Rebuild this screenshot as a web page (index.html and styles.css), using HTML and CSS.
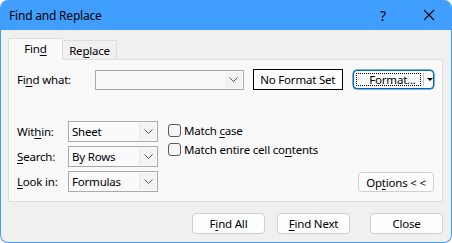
FILE: index.html
```html
<!DOCTYPE html>
<html lang="en">
<head>
    <meta charset="UTF-8">
    <meta name="viewport" content="width=device-width, initial-scale=1.0">
    <title>Find and Replace</title>
    <link rel="stylesheet" href="styles.css">
</head>
<body>
    <div class="window">
        <div class="titlebar">
            <p class="title">Find and Replace</p>
            <span class="title-help">?</span>
            <span class="title-close">
                <svg width="12" height="12" viewBox="0 0 12 12"><path d="M1 1 L11 11 M11 1 L1 11" stroke="#000" stroke-width="1.1" fill="none"/></svg>
            </span>
        </div>

        <div class="tabs">
            <div class="tab active"><span>Fin<u>d</u></span></div>
            <div class="tab"><span>Re<u>p</u>lace</span></div>
        </div>

        <div class="panel">
            <div class="find-row">
                <label class="label find-label" for="findWhat">Fi<u>n</u>d what:</label>
                <div class="combo">
                    <input type="text" id="findWhat" class="combo-input">
                    <span class="drop">
                        <svg width="9" height="5" viewBox="0 0 9 5"><path d="M0.5 0.5 L4.5 4.5 L8.5 0.5" stroke="#555" fill="none"/></svg>
                    </span>
                </div>
                <div class="format-preview">No Format Set</div>
                <div class="format-btn">
                    <span class="format-focus">Format...</span>
                    <span class="format-split"></span>
                    <span class="format-arrow"></span>
                </div>
            </div>

            <div class="options">
                <div class="selects">
                    <span class="label">Wit<u>h</u>in:</span>
                    <div class="select"><span>Sheet</span><span class="drop"><svg width="9" height="5" viewBox="0 0 9 5"><path d="M0.5 0.5 L4.5 4.5 L8.5 0.5" stroke="#555" fill="none"/></svg></span></div>
                    <span class="label"><u>S</u>earch:</span>
                    <div class="select"><span>By Rows</span><span class="drop"><svg width="9" height="5" viewBox="0 0 9 5"><path d="M0.5 0.5 L4.5 4.5 L8.5 0.5" stroke="#555" fill="none"/></svg></span></div>
                    <span class="label"><u>L</u>ook in:</span>
                    <div class="select"><span>Formulas</span><span class="drop"><svg width="9" height="5" viewBox="0 0 9 5"><path d="M0.5 0.5 L4.5 4.5 L8.5 0.5" stroke="#555" fill="none"/></svg></span></div>
                </div>
                <div class="checks">
                    <label class="check"><span class="box"></span><span>Match <u>c</u>ase</span></label>
                    <label class="check"><span class="box"></span><span>Match entire cell co<u>n</u>tents</span></label>
                </div>
                <div class="btn options-btn"><span>Op<u>t</u>ions &lt; &lt;</span></div>
            </div>
        </div>

        <div class="footer">
            <div class="btn"><span>F<u>i</u>nd All</span></div>
            <div class="btn"><span><u>F</u>ind Next</span></div>
            <div class="btn close-btn"><span>Close</span></div>
        </div>
    </div>
</body>
</html>
```

FILE: styles.css
```css
* {
    margin: 0;
    box-sizing: border-box;
}
html, body {
    width: 452px;
    height: 243px;
    background-color: white;
    overflow: hidden;
}
body {
    font-family: "Noto Sans", "Open Sans", sans-serif;
    font-size: 11.5px;
    letter-spacing: -0.2px;
    color: black;
}
u {
    text-decoration-thickness: 1px;
    text-underline-offset: 2px;
}
.window {
    width: 452px;
    height: 243px;
    border: 1px solid rgb(64, 158, 255);
    border-top: none;
    border-radius: 8px;
    background-color: rgb(240, 240, 240);
    overflow: hidden;
    display: flex;
    flex-direction: column;
}
.titlebar {
    height: 30px;
    flex-shrink: 0;
    background-color: rgb(64, 158, 255);
    display: flex;
    align-items: center;
    padding-left: 8px;
}
.title {
    flex: 1;
    font-size: 12px;
}
.title-help {
    width: 46px;
    text-align: center;
    font-size: 14px;
}
.title-close {
    width: 46px;
    display: flex;
    justify-content: center;
    margin-right: -1px;
}

.tabs {
    display: flex;
    align-items: flex-end;
    margin-top: 8px;
    padding-left: 7px;
    height: 21px;
    position: relative;
    z-index: 1;
}
.tab {
    height: 19px;
    width: 54px;
    border: 1px solid rgb(222, 222, 222);
    border-bottom: none;
    background-color: rgb(240, 240, 240);
    display: flex;
    justify-content: center;
    align-items: center;
}
.tab.active {
    height: 22px;
    width: 55px;
    margin-bottom: -1px;
    background-color: rgb(249, 249, 249);
    padding-bottom: 2px;
}
.tab.active + .tab {
    border-left: none;
}

.panel {
    margin: 0 8px 0 7px;
    height: 143px;
    border: 1px solid rgb(222, 222, 222);
    background-color: rgb(249, 249, 249);
    padding: 9px 8px 0 8px;
    display: flex;
    flex-direction: column;
}
.find-row {
    display: flex;
    align-items: center;
    height: 21px;
}
.find-label {
    width: 78px;
}
.combo {
    width: 149px;
    height: 20px;
    border: 1px solid rgb(170, 170, 170);
    background-color: rgb(250, 250, 250);
    display: flex;
}
.combo-input {
    flex: 1;
    min-width: 0;
    border: none;
    background: transparent;
    outline: none;
}
.drop {
    width: 17px;
    display: flex;
    justify-content: center;
    align-items: center;
    background-color: rgb(243, 243, 243);
    margin: 1px 1px 1px 0;
}
.format-preview {
    margin-left: 9px;
    width: 91px;
    height: 21px;
    border: 1px solid black;
    display: flex;
    justify-content: center;
    align-items: center;
    background-color: rgb(253, 253, 253);
}
.format-btn {
    margin-left: 10px;
    width: 81px;
    height: 19px;
    border: 1px solid rgb(0, 103, 192);
    border-radius: 4px;
    box-shadow: 0 0 0 0.5px rgb(0, 103, 192);
    background-color: rgb(253, 253, 253);
    display: flex;
    align-items: center;
    padding-left: 2px;
}
.format-focus {
    width: 67px;
    height: 13px;
    border: 1px dotted black;
    display: flex;
    justify-content: center;
    align-items: center;
    padding-left: 8px;
}
.format-split {
    width: 1px;
    height: 13px;
    margin-left: 2px;
    background-color: rgb(200, 200, 200);
}
.format-arrow {
    margin-left: 3px;
    width: 0;
    height: 0;
    border-left: 3px solid transparent;
    border-right: 3px solid transparent;
    border-top: 3px solid black;
}

.options {
    margin-top: 31px;
    display: flex;
    align-items: flex-start;
}
.selects {
    display: grid;
    grid-template-columns: 51px 90px;
    row-gap: 4px;
    align-items: center;
}
.select {
    height: 21px;
    border: 1px solid rgb(170, 170, 170);
    background-color: rgb(250, 250, 250);
    display: flex;
    align-items: center;
    justify-content: space-between;
    padding-left: 3px;
}
.select .drop {
    align-self: stretch;
    border-left: 1px solid rgb(232, 232, 232);
}
.checks {
    margin-left: 10px;
    margin-top: 2px;
    display: flex;
    flex-direction: column;
    gap: 4px;
}
.check {
    display: flex;
    align-items: center;
    gap: 3px;
    height: 15px;
}
.box {
    width: 13px;
    height: 13px;
    border: 1px solid rgb(90, 90, 90);
    border-radius: 3px;
    background-color: rgb(245, 245, 245);
}
.btn {
    width: 73px;
    height: 21px;
    border: 1px solid rgb(208, 208, 208);
    border-radius: 4px;
    background-color: rgb(253, 253, 253);
    display: flex;
    justify-content: center;
    align-items: center;
}
.options-btn {
    width: 76px;
    height: 20px;
    margin-left: auto;
    margin-top: 51px;
}

.footer {
    display: flex;
    justify-content: flex-end;
    gap: 12px;
    padding-right: 8px;
    margin-top: 11px;
}
.close-btn {
    margin-left: 8px;
}
```
